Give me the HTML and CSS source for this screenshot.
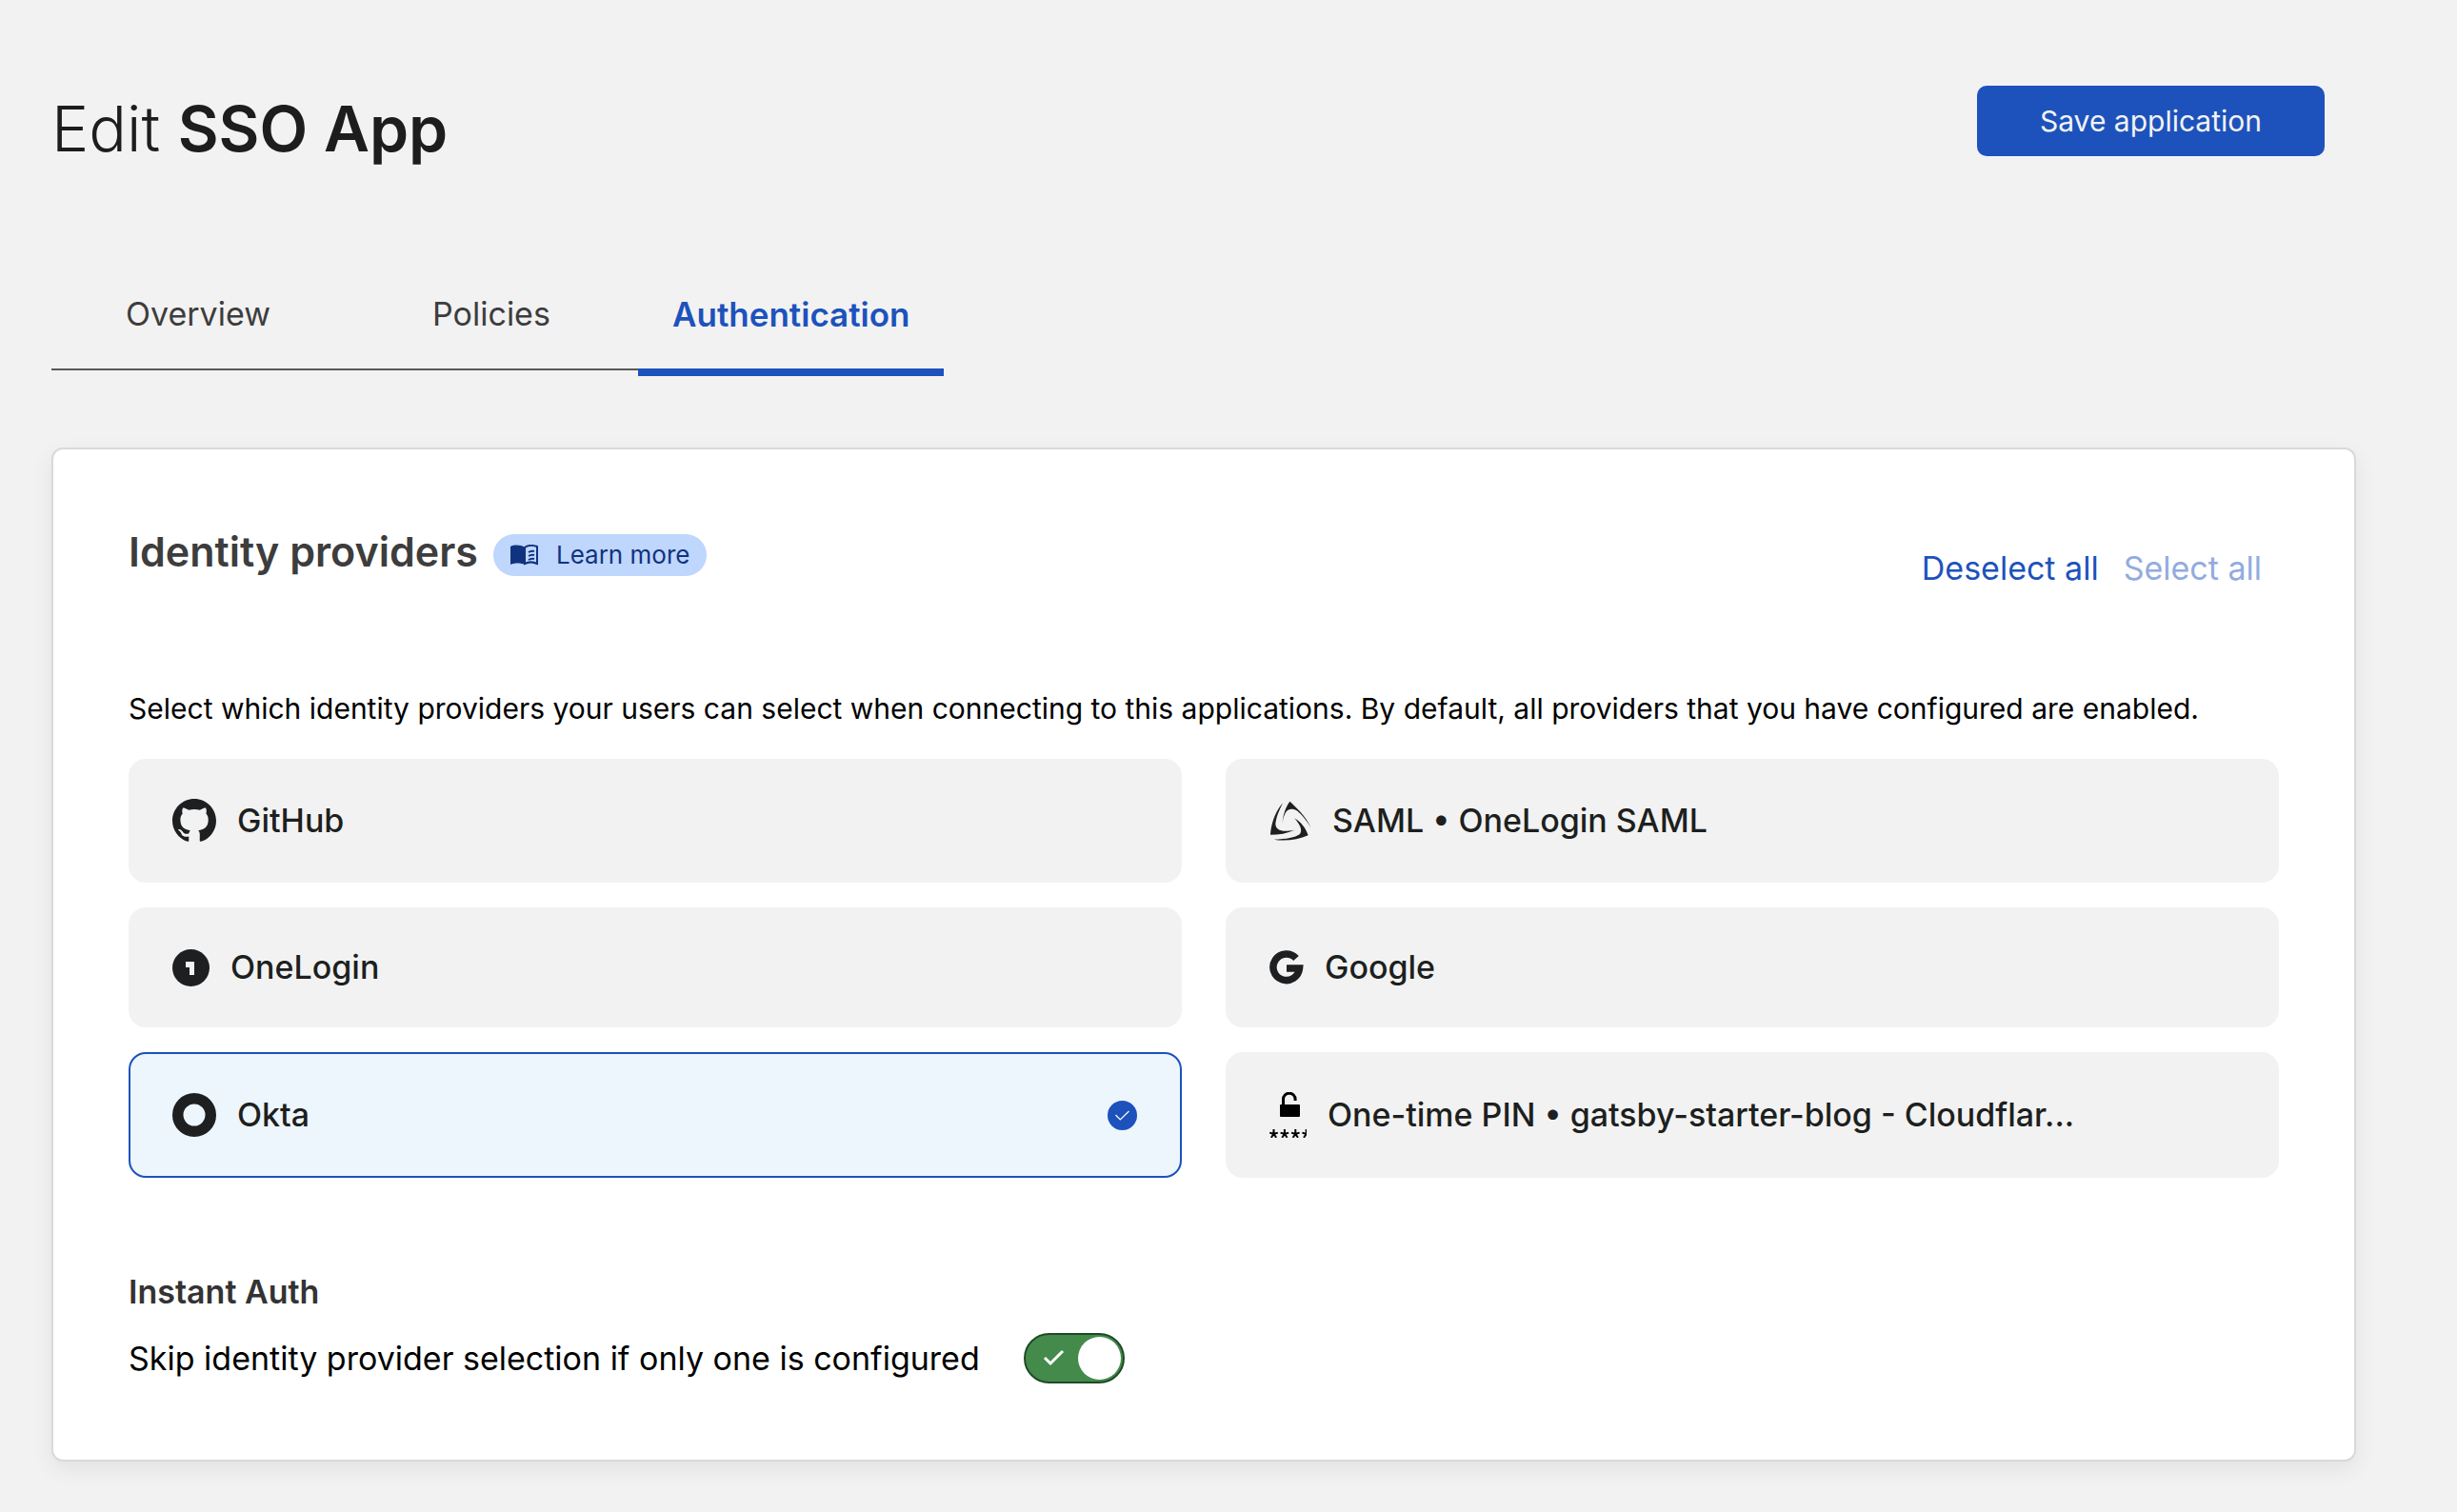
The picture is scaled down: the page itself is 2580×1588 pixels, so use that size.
FILE: index.html
```html
<!DOCTYPE html>
<html lang="en">
<head>
    <meta charset="UTF-8">
    <meta name="viewport" content="width=device-width, initial-scale=1.0">
    <title>Edit SSO App</title>
    <link rel="stylesheet" href="styles.css">
</head>
<body>
    <header class="page-header">
        <h1>Edit <strong>SSO App</strong></h1>
        <button type="button" class="save-btn">Save application</button>
    </header>

    <nav class="tabs">
        <a href="#overview" class="tab">Overview</a>
        <a href="#policies" class="tab">Policies</a>
        <a href="#authentication" class="tab active" aria-current="page">Authentication</a>
    </nav>

    <main class="card">
        <div class="card-header">
            <div class="card-title">
                <h2>Identity providers</h2>
                <a href="#learn-more" class="learn-more">
                    <svg width="30" height="22" viewBox="0 0 30 22" aria-hidden="true">
                        <path d="M0 2C4 0 11 0 15 3V21C11 19 4 19 0 21Z" fill="currentColor"/>
                        <path d="M15 3C19 0 25 1 28 2V20C24 18 19 18 15 20Z" fill="none" stroke="currentColor" stroke-width="2"/>
                        <path d="M19 8q3-2 6-1M19 12q3-2 6-1M19 16q3-2 6-1" fill="none" stroke="currentColor" stroke-width="2"/>
                    </svg>
                    Learn more
                </a>
            </div>
            <div class="card-actions">
                <button type="button" class="link-btn">Deselect all</button>
                <button type="button" class="link-btn" disabled>Select all</button>
            </div>
        </div>

        <p class="description">Select which identity providers your users can select when connecting to this applications. By default, all providers that you have configured are enabled.</p>

        <div class="providers">
            <label class="provider">
                <input type="checkbox" name="github">
                <svg width="46" height="46" viewBox="0 0 16 16" aria-hidden="true">
                    <path fill="currentColor" d="M8 0C3.58 0 0 3.58 0 8c0 3.54 2.29 6.53 5.47 7.59.4.07.55-.17.55-.38 0-.19-.01-.82-.01-1.49-2.01.37-2.53-.49-2.69-.94-.09-.23-.48-.94-.82-1.13-.28-.15-.68-.52-.01-.53.63-.01 1.08.58 1.23.82.72 1.21 1.87.87 2.33.66.07-.52.28-.87.51-1.07-1.78-.2-3.64-.89-3.64-3.95 0-.87.31-1.59.82-2.15-.08-.2-.36-1.02.08-2.12 0 0 .67-.21 2.2.82.64-.18 1.32-.27 2-.27.68 0 1.36.09 2 .27 1.53-1.04 2.2-.82 2.2-.82.44 1.1.16 1.92.08 2.12.51.56.82 1.27.82 2.15 0 3.07-1.87 3.75-3.65 3.95.29.25.54.73.54 1.48 0 1.07-.01 1.93-.01 2.2 0 .21.15.46.55.38A8.013 8.013 0 0016 8c0-4.42-3.58-8-8-8z"/>
                </svg>
                <span class="provider-name">GitHub</span>
            </label>

            <label class="provider">
                <input type="checkbox" name="saml">
                <svg width="44" height="44" viewBox="0 0 132 132" fill="currentColor" aria-hidden="true">
                    <path d="M64 5C80 20 115 50 131 89C118 65 100 45 88 35C72 26 58 28 50 42C45 52 42 62 41 75C42 50 50 25 64 5Z"/>
                    <path d="M3 110C4 85 15 40 42 10C28 38 20 60 19 78C22 96 38 103 79 95C55 106 30 110 3 110Z"/>
                    <path d="M122 112C90 127 45 131 14 125C55 123 80 120 96 108C104 96 98 80 79 58C100 72 112 85 122 112Z"/>
                </svg>
                <span class="provider-name">SAML • OneLogin SAML</span>
            </label>

            <label class="provider">
                <input type="checkbox" name="onelogin">
                <svg width="39" height="39" viewBox="0 0 39 39" aria-hidden="true">
                    <circle cx="19.5" cy="19.5" r="19.5" fill="currentColor"/>
                    <path d="M14 13h9v14h-5v-8h-4z" fill="#f2f2f2"/>
                </svg>
                <span class="provider-name">OneLogin</span>
            </label>

            <label class="provider">
                <input type="checkbox" name="google">
                <svg width="36" height="36" viewBox="0 0 36 36" aria-hidden="true">
                    <path d="M28 8.5A13.8 13.8 0 1 0 31.5 19H18" fill="none" stroke="currentColor" stroke-width="7.5"/>
                </svg>
                <span class="provider-name">Google</span>
            </label>

            <label class="provider">
                <input type="checkbox" name="okta" checked>
                <svg width="46" height="46" viewBox="0 0 46 46" aria-hidden="true">
                    <circle cx="23" cy="23" r="17.25" fill="none" stroke="currentColor" stroke-width="11.5"/>
                </svg>
                <span class="provider-name">Okta</span>
                <svg class="provider-check" width="31" height="31" viewBox="0 0 31 31" aria-hidden="true">
                    <circle cx="15.5" cy="15.5" r="15.5" fill="#1d52bc"/>
                    <path d="M8.5 15L13.3 20L22.5 11" fill="none" stroke="#fff" stroke-width="1.2"/>
                </svg>
            </label>

            <label class="provider">
                <input type="checkbox" name="pin">
                <svg width="39" height="48" viewBox="0 0 39 48" aria-hidden="true">
                    <rect x="11" y="13" width="21" height="13" rx="1" fill="#000"/>
                    <path d="M14.5 14V7.5A6.3 6.3 0 0 1 27.1 7.5V9" fill="none" stroke="#000" stroke-width="3"/>
                    <path d="M4.5 44v-5m0 5l4.3-1.4M4.5 44l2.7 3.8M4.5 44l-2.7 3.8M4.5 44l-4.3-1.4M15.9 44v-5m0 5l4.3-1.4M15.9 44l2.7 3.8M15.9 44l-2.7 3.8M15.9 44l-4.3-1.4M27.3 44v-5m0 5l4.3-1.4M27.3 44l2.7 3.8M27.3 44l-2.7 3.8M27.3 44l-4.3-1.4M38.7 44v-5m0 5l-2.7 3.8M38.7 44l-4.3-1.4" fill="none" stroke="#000" stroke-width="2"/>
                </svg>
                <span class="provider-name">One-time PIN • gatsby-starter-blog - Cloudflar...</span>
            </label>
        </div>

        <h3>Instant Auth</h3>
        <div class="instant-auth">
            <label for="instant-auth">Skip identity provider selection if only one is configured</label>
            <span class="switch">
                <input type="checkbox" id="instant-auth" checked>
                <svg width="26" height="20" viewBox="0 0 26 20" aria-hidden="true">
                    <path d="M3 9L9 15L22 2" fill="none" stroke="#fff" stroke-width="3"/>
                </svg>
            </span>
        </div>
    </main>
</body>
</html>
```
FILE: styles.css
```css
* {
    box-sizing: border-box;
}
body {
    margin: 0;
    padding: 90px 106px 50px 54px;
    font-family: 'Inter', sans-serif;
    font-size: 34px;
    line-height: 42px;
    background-color: #f2f2f2;
    color: #1d1f20;
}
h1, h2, h3, p {
    margin: 0;
}
button {
    border: none;
    font-family: inherit;
    cursor: pointer;
}

/* Header */
.page-header {
    display: flex;
    justify-content: space-between;
    align-items: flex-start;
    padding-right: 33px;
}
.page-header h1 {
    font-size: 66px;
    line-height: 90px;
    font-weight: 300;
    color: #1d1d1d;
}
.page-header strong {
    font-weight: 600;
}
.save-btn {
    padding: 16px 66px;
    font-size: 30px;
    line-height: 42px;
    background-color: #1d52bc;
    color: #f2f2f2;
    border-radius: 10px;
}

/* Tabs */
.tabs {
    display: flex;
    align-items: flex-start;
    margin-top: 109px;
}
.tab {
    min-width: 308px;
    padding: 20px 36px 36px;
    text-align: center;
    text-decoration: none;
    color: #3d3d3d;
    border-bottom: 2px solid #595959;
}
.tab.active {
    font-size: 35px;
    font-weight: 600;
    color: #1d52bc;
    border-bottom: 8px solid #1d52bc;
}

/* Card */
.card {
    margin-top: 75px;
    padding: 81px 79px 80px;
    background: #fff;
    border: 2px solid #d9d9d9;
    border-radius: 12px;
    box-shadow: 0 8px 24px rgba(0, 0, 0, 0.07);
}
.card-header {
    display: flex;
    justify-content: space-between;
    align-items: flex-start;
}
.card-title {
    display: flex;
    align-items: flex-end;
    gap: 16px;
}
.card-title h2 {
    font-size: 43px;
    line-height: 52px;
    font-weight: 600;
    color: #3d3d3d;
}
.learn-more {
    display: flex;
    align-items: center;
    gap: 18px;
    padding: 0 18px;
    font-size: 26px;
    line-height: 44px;
    text-decoration: none;
    background-color: #bfd6fd;
    color: #10337f;
    border-radius: 22px;
}
.card-actions {
    display: flex;
    gap: 26px;
    padding: 23px 18px 0 0;
}
.link-btn {
    padding: 0;
    background: none;
    font-size: 34px;
    line-height: 42px;
    color: #1d52bc;
}
.link-btn:disabled {
    color: #92abdf;
    cursor: default;
}
.description {
    margin: 103px 0 30px;
    font-size: 30px;
    line-height: 46px;
    color: #000;
}

/* Providers */
.providers {
    display: grid;
    grid-template-columns: 1fr 1fr;
    gap: 26px 46px;
}
.provider {
    position: relative;
    display: flex;
    align-items: center;
    gap: 22px;
    padding: 40px 45px 40px 44px;
    font-weight: 500;
    background-color: #f2f2f2;
    border: 2px solid #f2f2f2;
    border-radius: 18px;
    cursor: pointer;
}
.provider svg {
    flex-shrink: 0;
}
.provider input {
    position: absolute;
    opacity: 0;
}
.provider:has(input:checked) {
    background-color: #edf5fd;
    border-color: #1d52bc;
}
.provider-name {
    flex: 1;
    overflow: hidden;
    text-overflow: ellipsis;
    white-space: nowrap;
}

/* Instant Auth */
.card h3 {
    margin-top: 99px;
    font-size: 34px;
    font-weight: 600;
    color: #333;
}
.instant-auth {
    display: flex;
    align-items: center;
    gap: 46px;
    margin-top: 22px;
    color: #000;
}
.switch {
    position: relative;
    display: flex;
}
.switch input {
    appearance: none;
    display: flex;
    align-items: center;
    width: 106px;
    height: 53px;
    margin: 0;
    padding: 2px;
    background-color: #448a4b;
    border: 2px solid #1f4a26;
    border-radius: 27px;
    cursor: pointer;
}
.switch input::before {
    content: "";
    width: 45px;
    height: 45px;
    background: #fff;
    border-radius: 50%;
}
.switch input:checked {
    justify-content: flex-end;
}
.switch svg {
    position: absolute;
    left: 19px;
    top: 17px;
    pointer-events: none;
}
```
